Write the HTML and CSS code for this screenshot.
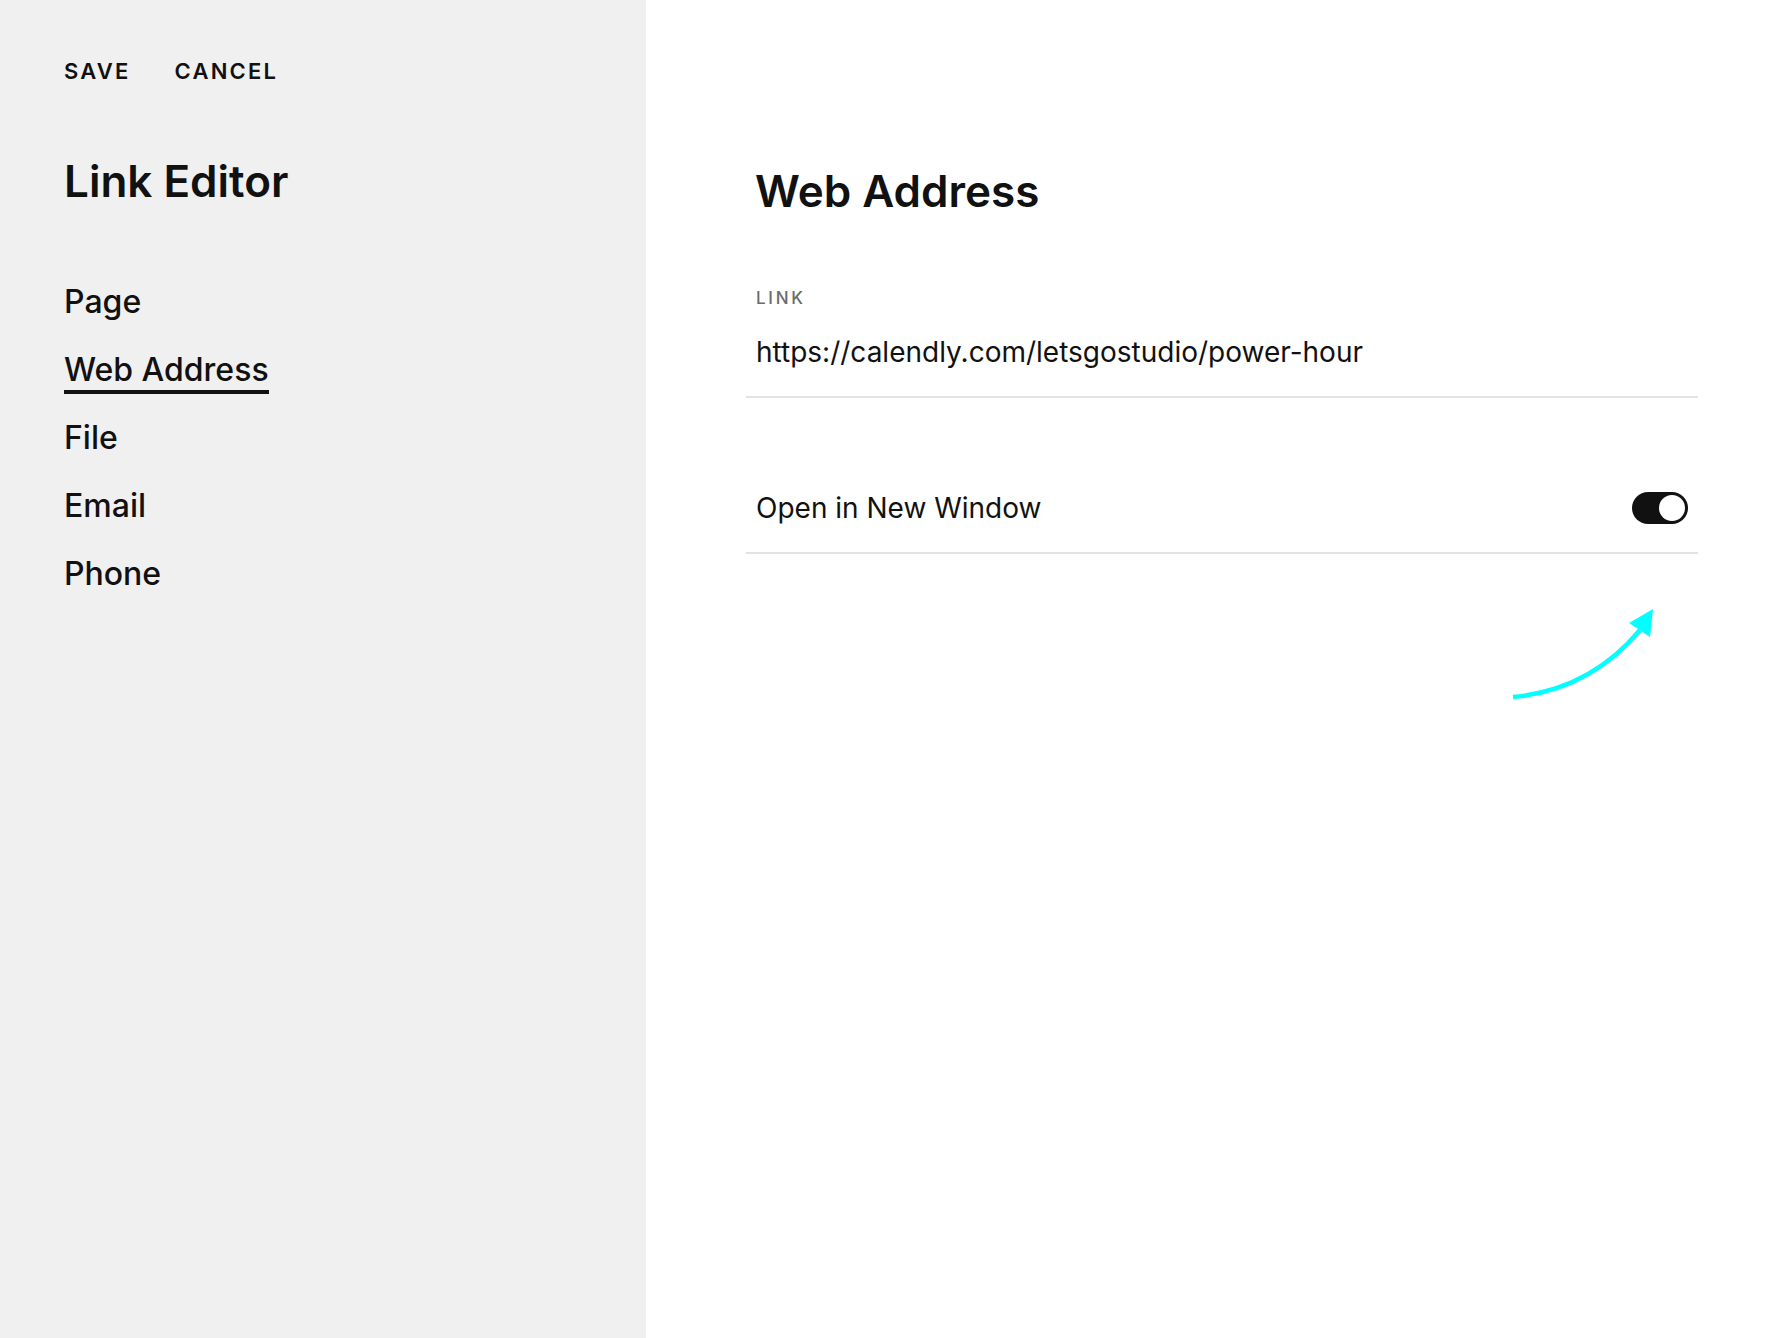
FILE: index.html
```html
<!DOCTYPE html>
<html lang="en">
<head>
  <meta charset="UTF-8">
  <meta name="viewport" content="width=device-width, initial-scale=1.0">
  <title>Link Editor</title>
  <link rel="stylesheet" href="styles.css">
</head>
<body>
  <aside class="sidebar">
    <div class="actions">
      <button type="button" class="action">Save</button>
      <button type="button" class="action">Cancel</button>
    </div>

    <h1 class="sidebar-title">Link Editor</h1>

    <nav class="nav">
      <a class="nav-item">Page</a>
      <a class="nav-item active">Web Address</a>
      <a class="nav-item">File</a>
      <a class="nav-item">Email</a>
      <a class="nav-item">Phone</a>
    </nav>
  </aside>

  <main class="panel">
    <h2 class="panel-title">Web Address</h2>

    <div class="field">
      <label for="linkUrl" class="field-label">Link</label>
      <input type="text" id="linkUrl" class="field-input" value="https://calendly.com/letsgostudio/power-hour">
    </div>

    <div class="toggle-row">
      <span class="toggle-label">Open in New Window</span>
      <span class="toggle on"><span class="toggle-knob"></span></span>
    </div>

    <!-- annotation arrow pointing at the toggle -->
    <svg class="hint-arrow" width="170" height="110" viewBox="0 0 170 110">
      <path d="M13 97 Q90 90 140 30" fill="none" stroke="#00ffff" stroke-width="4.5"/>
      <polygon points="153,9 129,23 150,37" fill="#00ffff"/>
    </svg>
  </main>
</body>
</html>
```

FILE: styles.css
```css
:root {
  --text-primary: #111111;
  --text-secondary: #6b6b6b;
  --sidebar-bg: #f0f0f0;
  --panel-bg: #ffffff;
  --border-color: #e3e3e3;
}

* {
  box-sizing: border-box;
}

body {
  display: flex;
  min-height: 100vh;
  margin: 0;
  color: var(--text-primary);
  font-family: Inter, "Liberation Sans", sans-serif;
  background-color: var(--panel-bg);
}

.sidebar {
  width: 646px;
  flex-shrink: 0;
  padding: 60px 0 0 64px;
  background-color: var(--sidebar-bg);
}

.actions {
  display: flex;
  gap: 44px;
}

.action {
  padding: 0;
  border: none;
  background: none;
  color: var(--text-primary);
  font-family: inherit;
  font-size: 22px;
  font-weight: 600;
  line-height: 1;
  letter-spacing: 0.1em;
  text-transform: uppercase;
  cursor: pointer;
}

.sidebar-title {
  margin: 77px 0 0;
  font-size: 44px;
  font-weight: 600;
  line-height: 1;
}

.nav {
  display: flex;
  flex-direction: column;
  align-items: flex-start;
  gap: 36px;
  margin-top: 83px;
}

.nav-item {
  position: relative;
  font-size: 32px;
  font-weight: 500;
  line-height: 1;
  cursor: pointer;
}

.nav-item.active::after {
  content: "";
  position: absolute;
  left: 0;
  right: 0;
  bottom: -8px;
  height: 4px;
  background-color: var(--text-primary);
}

.panel {
  position: relative;
  flex: 1;
  padding: 169px 92px 0 100px;
}

.panel-title {
  margin: 0;
  padding-left: 9px;
  font-size: 44px;
  font-weight: 600;
  line-height: 1;
}

.field {
  margin-top: 77px;
  padding: 0 10px 27px 10px;
  border-bottom: 2px solid var(--border-color);
}

.field-label {
  display: block;
  color: var(--text-secondary);
  font-size: 17px;
  font-weight: 500;
  line-height: 1;
  letter-spacing: 0.16em;
  text-transform: uppercase;
}

.field-input {
  display: block;
  width: 100%;
  height: 34px;
  margin-top: 28px;
  padding: 0;
  border: none;
  outline: none;
  background: none;
  color: var(--text-primary);
  font-family: inherit;
  font-size: 28px;
}

.toggle-row {
  display: flex;
  align-items: center;
  justify-content: space-between;
  margin-top: 66px;
  padding: 28px 10px 28px 10px;
  border-bottom: 2px solid var(--border-color);
}

.toggle-label {
  font-size: 28px;
  line-height: 1;
}

.toggle {
  display: flex;
  align-items: center;
  width: 56px;
  height: 32px;
  padding: 3px;
  border-radius: 16px;
  background-color: #ccc;
}

.toggle.on {
  justify-content: flex-end;
  background-color: var(--text-primary);
}

.toggle-knob {
  width: 26px;
  height: 26px;
  border-radius: 50%;
  background-color: #ffffff;
}

.hint-arrow {
  position: absolute;
  left: 854px;
  top: 600px;
}
```
